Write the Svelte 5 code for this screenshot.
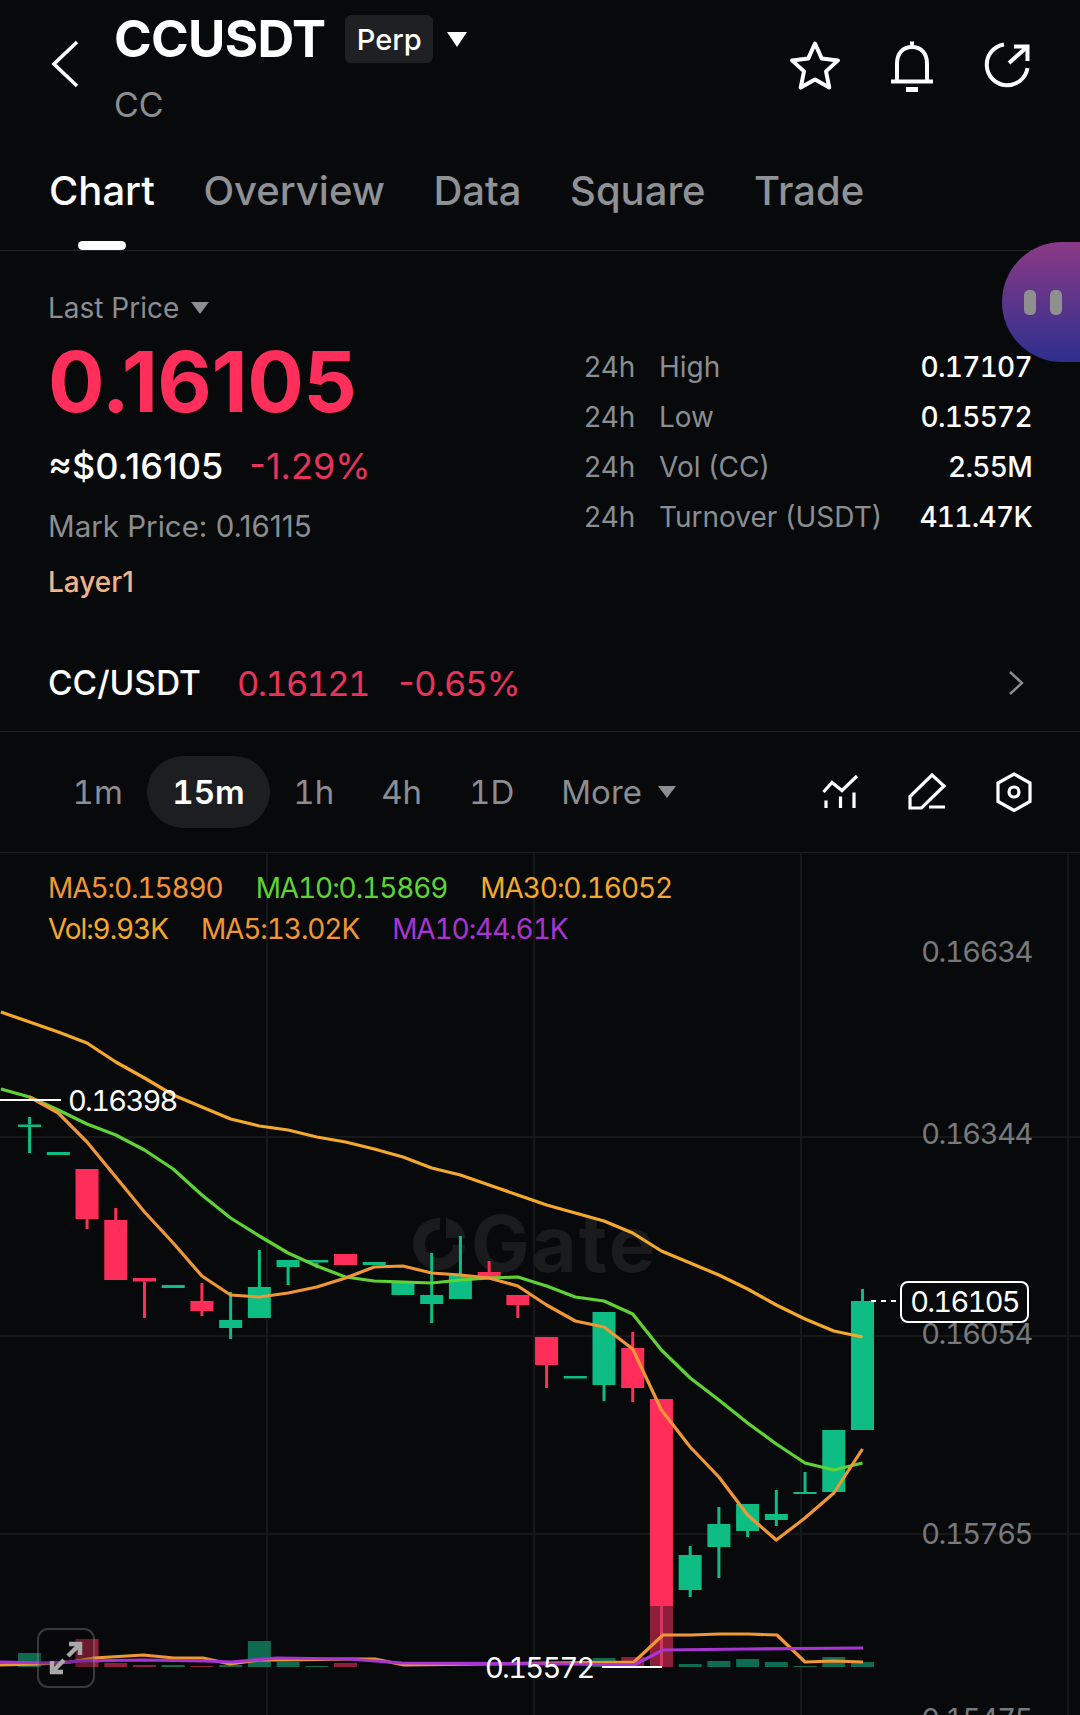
<script>
  const tabs = ['Chart', 'Overview', 'Data', 'Square', 'Trade'];
  const frames = ['1m', '15m', '1h', '4h', '1D'];
  const stats = [
    ['High', '0.17107'],
    ['Low', '0.15572'],
    ['Vol (CC)', '2.55M'],
    ['Turnover (USDT)', '411.47K']
  ];
  const axis = [
    ['0.16634', 952],
    ['0.16344', 1134],
    ['0.16054', 1334],
    ['0.15765', 1534],
    ['0.15475', 1719]
  ];

  // candle x position from its index
  const cx = (k) => 29.6 + 28.72 * k;
  const CHART_TOP = 853;

  // [index, colour, wick top, body top, body bottom, wick bottom]
  const candles = [
    [0, 'g', 1117, 1124.5, 1127, 1153],
    [1, 'g', 0, 1152, 1155, 0],
    [2, 'r', 0, 1169, 1219, 1229],
    [3, 'r', 1208, 1220, 1280, 0],
    [4, 'r', 0, 1278, 1281.5, 1318],
    [5, 'g', 0, 1285, 1288, 0],
    [6, 'r', 1283, 1301, 1311, 1316],
    [7, 'g', 1292, 1320, 1328, 1339],
    [8, 'g', 1250, 1287, 1318, 0],
    [9, 'g', 0, 1260, 1267, 1285],
    [10, 'g', 0, 1260, 1262.5, 1268],
    [11, 'r', 0, 1254, 1265, 0],
    [12, 'g', 0, 1262, 1265, 0],
    [13, 'g', 0, 1281, 1295, 0],
    [14, 'g', 1253, 1295, 1304, 1323],
    [15, 'g', 1236, 1275, 1299, 0],
    [16, 'r', 1261, 1272, 1277, 0],
    [17, 'r', 0, 1295, 1305, 1318],
    [18, 'r', 0, 1337, 1365, 1388],
    [19, 'g', 0, 1376, 1378.5, 0],
    [20, 'g', 0, 1312, 1385, 1401],
    [21, 'r', 1332, 1348, 1388, 1402],
    [22, 'r', 0, 1399, 1606, 0],
    [23, 'g', 1546, 1555, 1590, 1597],
    [24, 'g', 1507, 1524, 1547, 1578],
    [25, 'g', 0, 1504, 1531, 1537],
    [26, 'g', 1490, 1514, 1520, 1526],
    [27, 'g', 1472, 1492, 1494, 0],
    [28, 'g', 0, 1430, 1492, 0],
    [29, 'g', 1289, 1301, 1430, 0]
  ];

  // [index, colour, bar top], all bars stand on y = 1667
  const volumes = [
    [0, 'g', 1653], [2, 'r', 1639], [3, 'r', 1663], [4, 'r', 1665], [5, 'g', 1665],
    [6, 'r', 1666], [7, 'g', 1665], [8, 'g', 1641], [9, 'g', 1662], [10, 'g', 1666],
    [11, 'r', 1663], [20, 'g', 1658], [21, 'r', 1657], [22, 'r', 1606], [23, 'g', 1664],
    [24, 'g', 1661], [25, 'g', 1659], [26, 'g', 1662], [27, 'g', 1666], [28, 'g', 1657],
    [29, 'g', 1662]
  ];

  // moving averages: y per candle, first value sits at index -1 (left edge)
  const ma30 = [1012, 1022, 1032, 1043, 1062, 1078, 1095, 1107, 1119, 1126, 1130, 1137, 1142, 1149, 1157, 1168, 1175, 1185, 1195, 1205, 1213, 1221, 1233, 1251, 1263, 1275, 1289, 1305, 1319, 1331, 1337];
  const ma10 = [1089, 1097, 1110, 1124, 1135, 1150, 1169, 1195, 1218, 1236, 1253, 1266, 1277, 1281, 1282, 1283, 1280, 1278, 1277, 1286, 1297, 1301, 1314, 1350, 1378, 1400, 1423, 1444, 1463, 1470, 1463];
  const ma5 = [null, 1097, 1113, 1142, 1177, 1212, 1243, 1276, 1295, 1297, 1293, 1287, 1278, 1267, 1266, 1273, 1275, 1278, 1286, 1305, 1321, 1327, 1349, 1410, 1447, 1477, 1515, 1540, 1518, 1493, 1449];

  const toPoints = (list) =>
    list
      .map((y, i) => (y === null ? null : `${cx(i - 1).toFixed(1)},${y}`))
      .filter(Boolean)
      .join(' ');

  const volMa5 = '0,1665 40,1664 70,1662 94,1658 143,1655 174,1658 203,1658 230,1664 259,1660 286,1660 348,1659 375,1659 404,1665 634,1662 663,1635 691,1635 719,1634 748,1634 777,1635 805,1662 834,1661 863,1662';
  const volMa10 = '0,1662 54,1663 80,1661 143,1660 205,1661 232,1662 277,1658 348,1659 402,1663 571,1664 634,1665 663,1650 748,1649 863,1648';
</script>

<div class="page">
  <header class="top">
    <button class="back" aria-label="Back">
      <svg width="30" height="48" viewBox="0 0 30 48">
        <path d="M27 2 L4 24 L27 46" fill="none" stroke="#fff" stroke-width="3.6" />
      </svg>
    </button>
    <div class="title-block">
      <div class="title-line">
        <h1 class="symbol">CCUSDT</h1>
        <span class="perp">Perp</span>
        <i class="caret caret-white"></i>
      </div>
      <div class="coin">CC</div>
    </div>
    <div class="actions">
      <svg width="52" height="52" viewBox="0 0 52 52">
        <path d="M26 3.5 L32.8 18.6 L49 20.4 L37 31.4 L40.3 47.6 L26 39.4 L11.7 47.6 L15 31.4 L3 20.4 L19.2 18.6 Z" fill="none" stroke="#fff" stroke-width="4" stroke-linejoin="round" />
      </svg>
      <svg width="44" height="52" viewBox="0 0 44 52">
        <path d="M1 41.5 H43 M7 41.5 V24 C7 13 13 7 22 7 C31 7 37 13 37 24 V41.5 M22 1.5 V7" fill="none" stroke="#fff" stroke-width="4" />
        <rect x="16" y="47" width="12" height="5" fill="#fff" />
      </svg>
      <svg width="48" height="52" viewBox="0 0 48 52">
        <path d="M21 4.5 A20.5 20.5 0 1 0 44.5 28" fill="none" stroke="#fff" stroke-width="4" />
        <path d="M26 23 L44 7 M31 6.5 H44.5 V21" fill="none" stroke="#fff" stroke-width="4" />
      </svg>
    </div>
  </header>

  <nav class="tabs">
    {#each tabs as tab, i}
      <span class="tab" class:active={i === 0}>{tab}</span>
    {/each}
  </nav>

  <section class="summary">
    <div class="price-col">
      <div class="last-label">Last Price <i class="caret caret-grey"></i></div>
      <div class="price">0.16105</div>
      <div class="fiat"><span>≈$0.16105</span><span class="down">-1.29%</span></div>
      <div class="mark">Mark Price: 0.16115</div>
      <div class="sector">Layer1</div>
    </div>
    <div class="stats">
      {#each stats as [label, value]}
        <span class="stat-h">24h</span>
        <span class="stat-label">{label}</span>
        <span class="stat-value">{value}</span>
      {/each}
    </div>
  </section>

  <div class="float-ball" aria-hidden="true">
    <i></i><i></i>
  </div>

  <section class="spot">
    <span class="spot-name">CC/USDT</span>
    <span class="spot-price">0.16121</span>
    <span class="spot-change">-0.65%</span>
    <svg class="chev" width="16" height="26" viewBox="0 0 16 26">
      <path d="M2 2 L14 13 L2 24" fill="none" stroke="#8a8d91" stroke-width="2.4" />
    </svg>
  </section>

  <section class="frames">
    {#each frames as frame, i}
      <span class="frame" class:on={i === 1}>{frame}</span>
    {/each}
    <span class="frame more">More <i class="caret caret-grey"></i></span>
    <div class="tools">
      <svg width="40" height="40" viewBox="0 0 40 40">
        <path d="M3.5 20 L12 10.5 L22 18.5 L37 4 M6 28.5 V36 M20.5 24.5 V36 M34 20.5 V36" fill="none" stroke="#fff" stroke-width="3.2" />
      </svg>
      <svg width="40" height="40" viewBox="0 0 40 40">
        <path d="M3 36 V24.5 L25 3 L37 14 L14.500 36 Z M22 35 H38" fill="none" stroke="#fff" stroke-width="3.2" />
      </svg>
      <svg width="40" height="40" viewBox="0 0 40 40">
        <path d="M20 2 L36 11 V29.500 L20 38.500 L4 29.500 V11 Z" fill="none" stroke="#fff" stroke-width="3.2" />
        <circle cx="20" cy="20" r="5" fill="none" stroke="#fff" stroke-width="3.2" />
      </svg>
    </div>
  </section>

  <section class="chart">
    <div class="watermark">Gate</div>

    <svg class="plot" width="1080" height="862" viewBox="0 853 1080 862">
      <g stroke="#1b1d1f" stroke-width="1.5">
        <line x1="267" y1="853" x2="267" y2="1715" />
        <line x1="534" y1="853" x2="534" y2="1715" />
        <line x1="801" y1="853" x2="801" y2="1715" />
        <line x1="1068" y1="853" x2="1068" y2="1715" />
        <line x1="0" y1="1137" x2="1080" y2="1137" />
        <line x1="0" y1="1336" x2="1080" y2="1336" />
        <line x1="0" y1="1534" x2="1080" y2="1534" />
      </g>

      <g fill="none" stroke="#191b1d">
        <path d="M440 1224 A20 20 0 1 0 459 1245" stroke-width="12" />
        <path d="M446 1218 A26 26 0 0 1 466 1238 H446 Z" fill="#191b1d" stroke="none" />
      </g>

      {#each volumes as [k, c, top]}
        <rect x={cx(k) - 11.500} y={top} width="23" height={1667 - top} class={c === 'g' ? 'vol-g' : 'vol-r'} />
      {/each}
      <rect x="660" y="1606" width="3" height="61" fill="#d8355f" />

      {#each candles as [k, c, wickTop, bodyTop, bodyBot, wickBot]}
        <g class={c === 'g' ? 'up' : 'dn'}>
          {#if wickTop}
            <rect x={cx(k) - 1.500} y={wickTop} width="3" height={bodyTop - wickTop} />
          {/if}
          {#if wickBot}
            <rect x={cx(k) - 1.500} y={bodyBot} width="3" height={wickBot - bodyBot} />
          {/if}
          <rect x={cx(k) - 11.500} y={bodyTop} width="23" height={bodyBot - bodyTop} />
        </g>
      {/each}

      <polyline points={toPoints(ma30)} class="line" stroke="#f5a92b" />
      <polyline points={toPoints(ma10)} class="line" stroke="#5fd335" />
      <polyline points={toPoints(ma5)} class="line" stroke="#ef9737" />
      <polyline points={volMa5} class="line" stroke="#ef9737" />
      <polyline points={volMa10} class="line" stroke="#a835d2" />

      <line x1="0" y1="1100" x2="61" y2="1100" stroke="#fff" stroke-width="2" />
      <line x1="602" y1="1667" x2="662" y2="1667" stroke="#fff" stroke-width="2" />
      <line x1="871" y1="1301" x2="900" y2="1301" stroke="#fff" stroke-width="2" stroke-dasharray="5 5" />
    </svg>

    <div class="ma-rows">
      <div class="ma-row">
        <span class="c-ma5">MA5:0.15890</span>
        <span class="c-ma10">MA10:0.15869</span>
        <span class="c-ma30">MA30:0.16052</span>
      </div>
      <div class="ma-row">
        <span class="c-ma30">Vol:9.93K</span>
        <span class="c-ma5">MA5:13.02K</span>
        <span class="c-vol10">MA10:44.61K</span>
      </div>
    </div>

    {#each axis as [value, y]}
      <span class="axis" style="top: {y - CHART_TOP - 20}px">{value}</span>
    {/each}

    <span class="hi-label">0.16398</span>
    <span class="lo-label">0.15572</span>
    <span class="now-label">0.16105</span>

    <button class="expand" aria-label="Expand">
      <svg width="34" height="34" viewBox="0 0 34 34">
        <path d="M19 15 L29 5 M20 3 H31 V14 M15 19 L5 29 M3 20 V31 H14" fill="none" stroke="#a9a9a9" stroke-width="4.500" />
      </svg>
    </button>
  </section>
</div>

<style>
  :global(body) {
    background: #08090a;
  }

  .page {
    position: relative;
    width: 1080px;
    height: 1715px;
    overflow: hidden;
    background: #08090a;
    color: #fff;
    font-family: Inter, "Liberation Sans", sans-serif;
  }

  /* header */
  .top {
    display: flex;
    height: 130px;
    padding-left: 50px;
    box-sizing: border-box;
  }

  .back {
    width: 64px;
    height: 130px;
    padding: 0;
    background: none;
    border: 0;
    text-align: left;
  }

  .title-block {
    padding-top: 12px;
  }

  .title-line {
    display: flex;
    align-items: center;
    height: 54px;
  }

  .symbol {
    margin: 0 20px 0 0;
    font-size: 51px;
    font-weight: 700;
    letter-spacing: -0.7px;
    line-height: 54px;
  }

  .perp {
    display: flex;
    align-items: center;
    justify-content: center;
    width: 88px;
    height: 48px;
    margin-right: 14px;
    border-radius: 6px;
    background: #1e2023;
    font-size: 29px;
    font-weight: 500;
  }

  .coin {
    margin-top: 22px;
    color: #8a8d91;
    font-size: 34px;
    line-height: 34px;
  }

  .caret {
    display: inline-block;
    width: 0;
    height: 0;
    border-left: 10.500px solid transparent;
    border-right: 10.500px solid transparent;
  }

  .caret-white {
    border-top: 15px solid #fff;
  }

  .caret-grey {
    border-left-width: 9px;
    border-right-width: 9px;
    border-top: 12px solid #8a8d91;
  }

  .actions {
    display: flex;
    align-items: flex-start;
    gap: 49px;
    margin-left: auto;
    padding: 40px 49px 0 0;
  }

  /* tabs */
  .tabs {
    display: flex;
    gap: 48.500px;
    height: 120px;
    padding-left: 49px;
    border-bottom: 1px solid #232527;
  }

  .tab {
    position: relative;
    color: #8e9195;
    font-size: 40px;
    font-weight: 500;
    line-height: 122px;
  }

  .tab.active {
    color: #fff;
  }

  .tab.active::after {
    content: '';
    position: absolute;
    left: 29px;
    bottom: 0;
    width: 48px;
    height: 9px;
    border-radius: 5px;
    background: #fff;
  }

  /* price summary */
  .summary {
    display: flex;
    justify-content: space-between;
    height: 384px;
    padding: 37px 48px 0;
    box-sizing: border-box;
  }

  .last-label {
    display: flex;
    align-items: center;
    gap: 12px;
    color: #8a8d91;
    font-size: 28px;
    line-height: 40px;
  }

  .price {
    margin-top: 12px;
    color: #ff2e5b;
    font-size: 84px;
    font-weight: 700;
    line-height: 84px;
    letter-spacing: -0.5px;
  }

  .fiat {
    display: flex;
    gap: 26px;
    margin-top: 20px;
    font-size: 36px;
    font-weight: 500;
    line-height: 44px;
  }

  .down {
    color: #e8345c;
    font-weight: 400;
  }

  .mark {
    margin-top: 18px;
    color: #8a8d91;
    font-size: 29.500px;
    line-height: 40px;
  }

  .sector {
    margin-top: 16px;
    color: #f0b48a;
    font-size: 28px;
    font-weight: 500;
    line-height: 40px;
  }

  .stats {
    display: grid;
    grid-template-columns: 75px 1fr auto;
    grid-auto-rows: 50px;
    width: 448px;
    height: 200px;
    margin-top: 54px;
    color: #8a8d91;
    font-size: 28px;
    line-height: 50px;
  }

  .stat-value {
    color: #fff;
    font-weight: 500;
    text-align: right;
    font-variant-numeric: tabular-nums;
    letter-spacing: -0.7px;
  }

  .float-ball {
    position: absolute;
    top: 242px;
    right: 0;
    display: flex;
    align-items: center;
    gap: 14px;
    box-sizing: border-box;
    width: 78px;
    height: 120px;
    padding: 0 0 0 22px;
    border-radius: 60px 0 0 60px;
    background: linear-gradient(180deg, #8a3a86, #2e2f8e);
  }

  .float-ball i {
    width: 12px;
    height: 25px;
    border-radius: 5px;
    background: #8f8f8f;
  }

  /* spot row */
  .spot {
    display: flex;
    align-items: center;
    height: 96px;
    padding: 0 56px 0 48px;
    font-size: 34.500px;
    border-bottom: 1px solid #232527;
  }

  .spot-name {
    margin-right: 36px;
    font-size: 33.500px;
    font-weight: 500;
  }

  .spot-price {
    margin-right: 30px;
    color: #e8345c;
    font-variant-numeric: tabular-nums;
    letter-spacing: -1.7px;
  }

  .spot-change {
    color: #e8345c;
  }

  .chev {
    margin-left: auto;
  }

  /* timeframes */
  .frames {
    display: flex;
    align-items: center;
    height: 120px;
    padding-left: 49px;
    border-bottom: 1px solid #1f2123;
    box-sizing: content-box;
  }

  .frame {
    padding: 0 23.500px;
    color: #8a8d91;
    font-size: 33px;
    line-height: 72px;
    font-variant-numeric: tabular-nums;
  }

  .frame.on {
    padding: 0 25px;
    margin-left: 1px;
    border-radius: 36px;
    background: #1c1e21;
    color: #fff;
    font-weight: 600;
  }

  .more {
    display: flex;
    align-items: center;
    gap: 16px;
  }

  .tools {
    display: flex;
    gap: 47px;
    margin-left: auto;
    padding-right: 46px;
  }

  /* chart */
  .chart {
    position: relative;
    height: 862px;
  }

  .plot {
    position: absolute;
    inset: 0;
    display: block;
  }

  .vol-g {
    fill: #0f6b50;
  }

  .vol-r {
    fill: #8e1f3a;
  }

  .up rect {
    fill: #0dbd83;
  }

  .dn rect {
    fill: #ff2d5a;
  }

  .line {
    fill: none;
    stroke-width: 3.200;
    stroke-linejoin: round;
  }

  .watermark {
    position: absolute;
    left: 471px;
    top: 353px;
    color: #191b1d;
    font-size: 78px;
    font-weight: 700;
    line-height: 76px;
    letter-spacing: 2px;
  }

  .ma-rows {
    position: relative;
    padding: 15px 0 0 48px;
    font-size: 28px;
    line-height: 41px;
    font-variant-numeric: tabular-nums;
    letter-spacing: -1.1px;
  }

  .ma-row {
    display: flex;
    gap: 33px;
  }

  .c-ma5 {
    color: #ef9737;
  }

  .c-ma10 {
    color: #5fd335;
  }

  .c-ma30 {
    color: #f5a92b;
  }

  .c-vol10 {
    color: #a835d2;
  }

  .axis {
    position: absolute;
    right: 48px;
    color: #77797c;
    font-size: 29px;
    line-height: 40px;
    font-variant-numeric: tabular-nums;
    letter-spacing: -1.4px;
  }

  .hi-label,
  .lo-label {
    position: absolute;
    font-size: 29px;
    line-height: 40px;
    font-variant-numeric: tabular-nums;
    letter-spacing: -1.700px;
  }

  .hi-label {
    left: 68px;
    top: 228px;
  }

  .lo-label {
    left: 485px;
    top: 795px;
  }

  .now-label {
    position: absolute;
    left: 900px;
    top: 428px;
    box-sizing: border-box;
    width: 129px;
    height: 42px;
    border: 2px solid #fff;
    border-radius: 8px;
    background: #08090a;
    font-size: 29px;
    line-height: 38px;
    text-align: center;
    font-variant-numeric: tabular-nums;
    letter-spacing: -1.700px;
  }

  .expand {
    position: absolute;
    left: 37px;
    top: 775px;
    display: flex;
    align-items: center;
    justify-content: center;
    width: 58px;
    height: 60px;
    padding: 0;
    border: 2px solid rgba(255, 255, 255, 0.2);
    border-radius: 11px;
    background: rgba(8, 9, 10, 0.25);
  }
</style>
